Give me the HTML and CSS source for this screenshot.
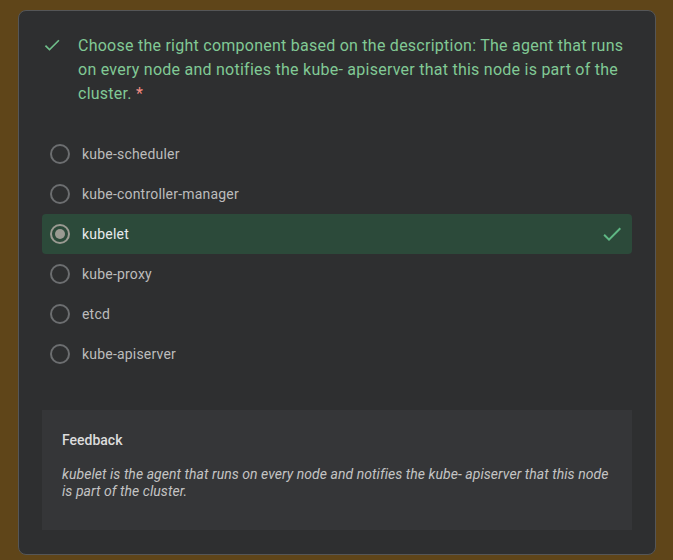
FILE: index.html
```html
<!DOCTYPE html>
<html>
<head>
<meta charset="utf-8">
<link rel="stylesheet" href="styles.css">
</head>
<body>
<div class="card">
  <div class="question">
    <svg class="q-check" viewBox="0 0 24 24" width="20" height="20"><path d="M9 16.17L4.83 12l-1.42 1.41L9 19 21 7l-1.41-1.41z" fill="#6fbf8a"/></svg>
    <div class="q-text">Choose the right component based on the description: The agent that runs on every node and notifies the kube- apiserver that this node is part of the cluster. <span class="req">*</span></div>
  </div>
  <div class="options">
    <div class="option"><span class="radio"></span><span class="label">kube-scheduler</span></div>
    <div class="option"><span class="radio"></span><span class="label">kube-controller-manager</span></div>
    <div class="option selected"><span class="radio on"></span><span class="label">kubelet</span>
      <svg class="opt-check" viewBox="0 0 24 24" width="24" height="24"><path d="M9 16.17L4.83 12l-1.42 1.41L9 19 21 7l-1.41-1.41z" fill="#5fb884"/></svg>
    </div>
    <div class="option"><span class="radio"></span><span class="label">kube-proxy</span></div>
    <div class="option"><span class="radio"></span><span class="label">etcd</span></div>
    <div class="option"><span class="radio"></span><span class="label">kube-apiserver</span></div>
  </div>
  <div class="feedback">
    <div class="fb-title">Feedback</div>
    <div class="fb-text">kubelet is the agent that runs on every node and notifies the kube- apiserver that this node is part of the cluster.</div>
  </div>
</div>
</body>
</html>
```
FILE: styles.css
```css
html, body {
  margin: 0;
  padding: 0;
}
body {
  background: #5f4519;
  font-family: Roboto, "Liberation Sans", sans-serif;
  padding: 10px 17px 5px 18px;
}
.card {
  box-sizing: border-box;
  width: 638px;
  height: 545px;
  background: #2e2f30;
  border: 1px solid #555657;
  border-radius: 8px;
  padding: 23px 23px 0 23px;
}
.question {
  display: flex;
  align-items: flex-start;
}
.q-check {
  flex: none;
  margin-top: 1px;
  margin-right: 16px;
}
.q-text {
  color: #81c995;
  font-size: 16px;
  line-height: 24px;
  letter-spacing: 0.25px;
}
.req {
  color: #f28b82;
}
.options {
  margin-top: 28px;
  display: flex;
  flex-direction: column;
}
.option {
  display: flex;
  align-items: center;
  height: 40px;
  padding: 0 8px;
  border-radius: 4px;
}
.option.selected {
  background: #2c4a3a;
}
.radio {
  box-sizing: border-box;
  width: 20px;
  height: 20px;
  border: 2px solid #6c6e70;
  border-radius: 50%;
  flex: none;
  display: flex;
  align-items: center;
  justify-content: center;
}
.radio.on {
  border-color: #9a9a92;
}
.radio.on::after {
  content: "";
  width: 10px;
  height: 10px;
  border-radius: 50%;
  background: #9a9a92;
}
.label {
  margin-left: 12px;
  font-size: 14px;
  color: #bcbcbc;
  letter-spacing: 0.2px;
  flex: 1;
}
.selected .label {
  color: #e8eaed;
}
.opt-check {
  flex: none;
}
.feedback {
  margin-top: 36px;
  background: #353638;
  min-height: 120px;
  box-sizing: border-box;
  padding: 20px 20px 20px 20px;
}
.fb-title {
  color: #dcdcdc;
  font-size: 14px;
  font-weight: 500;
  line-height: 20px;
}
.fb-text {
  margin-top: 16px;
  color: #c4c4c4;
  font-size: 14px;
  font-style: italic;
  line-height: 17px;
  letter-spacing: 0.05px;
}
```
